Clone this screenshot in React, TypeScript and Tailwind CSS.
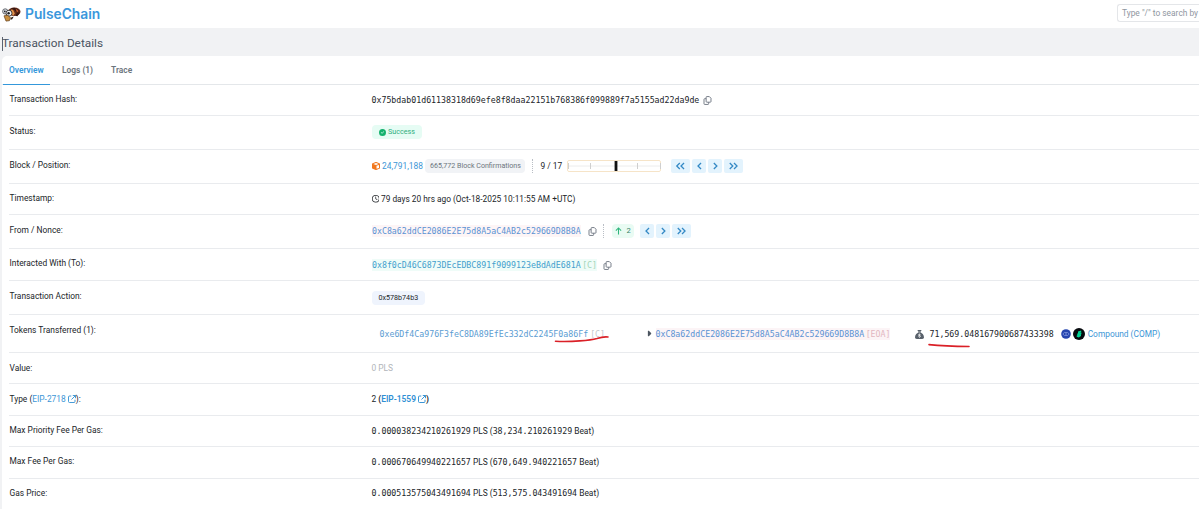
import type { ReactNode } from 'react';
import { FaCube, FaCircleCheck, FaRegClock, FaSackDollar, FaCaretRight } from 'react-icons/fa6';

function Mono({ children, className = '' }: { children: ReactNode; className?: string }) {
  return <span className={`font-['DejaVu_Sans_Mono',monospace] text-[8.26px] ${className}`}>{children}</span>;
}

function CopyIcon({ className = '' }: { className?: string }) {
  return (
    <svg viewBox="0 0 16 16" fill="none" stroke="#6a727e" strokeWidth="1.6" className={`h-[9px] w-[9px] shrink-0 ${className}`}>
      <path d="M6.8 1h4.4l3 3v5.8a1.2 1.2 0 0 1-1.2 1.2H6.8a1.2 1.2 0 0 1-1.2-1.2V2.2A1.2 1.2 0 0 1 6.8 1z" />
      <path d="M5.4 4.8H3a1.2 1.2 0 0 0-1.2 1.2v7.8A1.2 1.2 0 0 0 3 15h5.8a1.2 1.2 0 0 0 1.2-1.2v-2.6" />
    </svg>
  );
}

function ExternalIcon() {
  return (
    <svg viewBox="0 0 16 16" fill="none" stroke="currentColor" strokeWidth="1.9" className="ml-[2px] inline-block h-[8px] w-[8px] align-[-1px]">
      <path d="M6.5 2H3a2 2 0 0 0-2 2v9a2 2 0 0 0 2 2h9a2 2 0 0 0 2-2V9.5M9.5 1H15v5.5M15 1 7 9" />
    </svg>
  );
}

function Step({ kind, className = 'w-[14px]' }: { kind: 'first' | 'prev' | 'next' | 'last'; className?: string }) {
  const paths = {
    first: 'M6 1.2 2.2 5 6 8.8M11.3 1.2 7.5 5 11.3 8.8',
    prev: 'M8.8 1.2 5 5 8.8 8.8',
    next: 'M4.8 1.2 8.6 5 4.8 8.8',
    last: 'M2.2 1.2 6 5 2.2 8.8M7.5 1.2 11.3 5 7.5 8.8',
  };
  return (
    <span className={`flex h-[14px] shrink-0 items-center justify-center rounded-[2px] bg-[#e3f3fd] ${className}`}>
      <svg viewBox="0 0 13.5 10" fill="none" stroke="#3389c5" strokeWidth="1.6" className="h-[8px] w-[10.8px] shrink-0">
        <path d={paths[kind]} />
      </svg>
    </span>
  );
}

function Divider() {
  return <span className="h-[14px] w-0 shrink-0 border-l border-dotted border-[#b9bec5]" />;
}

function BeeLogo() {
  return (
    <svg viewBox="0 0 19 16" className="h-4 w-[19px] shrink-0">
      <ellipse cx="12.3" cy="5.8" rx="6.2" ry="4.2" fill="#6b2f1c" />
      <path d="M8 3.2q4-3 8 0l1.8 3.6-2.4 3.4-2-.4 1.6-3-2.8-3z" fill="#35150f" />
      <path d="M9 3.4l2 .4 1.8 3.8-1.6 2.2-2.2-3z" fill="#e2934a" />
      <path d="M13.5 2.6l2.6 1.6.4 2.4-1.8-.6z" fill="#b9562b" />
      <circle cx="3.2" cy="5.4" r="2.6" fill="#d8dde3" stroke="#4b4f55" strokeWidth=".8" />
      <circle cx="7" cy="7.2" r="3" fill="#eef1f4" stroke="#33302f" strokeWidth=".9" />
      <circle cx="6.6" cy="7.2" r="1.2" fill="#191b20" />
      <circle cx="2.8" cy="5.4" r=".9" fill="#24262b" />
      <path d="M2 9.8l3.6-.5 3 2.4-1.2 3-3.4.4z" fill="#c98f3e" stroke="#5d3b18" strokeWidth=".7" />
      <path d="M9.2 11.4l2.6-.8-1.6 2.6-1.6.6z" fill="#2c1d1a" />
    </svg>
  );
}

interface RowProps {
  label: ReactNode;
  height: string;
  pad: string;
  labelPad?: string;
  children: ReactNode;
}

function Row({ label, height, pad, labelPad = 'pt-[10px]', children }: RowProps) {
  return (
    <div className={`ml-[7px] flex shrink-0 border-b border-[#e9ebee] ${height}`}>
      <div className={`w-[362.5px] shrink-0 pl-[0.5px] leading-[11px] ${labelPad}`}>{label}</div>
      <div className={`flex-1 ${pad}`}>
        <div className="flex h-[14px] items-center whitespace-nowrap">{children}</div>
      </div>
    </div>
  );
}

function Fee({ pls, beat }: { pls: string; beat: string }) {
  return (
    <span>
      <Mono>{pls}</Mono> PLS (<Mono>{beat}</Mono> Beat)
    </span>
  );
}

export default function App() {
  return (
    <div className="relative flex h-[509px] w-[1199px] flex-col overflow-hidden bg-[#f1f2f4] font-[Roboto,sans-serif] text-[8.4px] text-[#212529]">
      <header className="flex h-7 shrink-0 items-start justify-between bg-white">
        <div className="flex items-center pt-[5px] pl-[2px]">
          <BeeLogo />
          <span className="ml-1 font-[Inter,sans-serif] text-[13.8px] leading-[18px] font-semibold text-[#3a97dc]">PulseChain</span>
        </div>
        <div className="mt-1 h-[18px] w-[82px] overflow-hidden rounded-l-[3px] border border-r-0 border-[#e4e6e9] pl-1 leading-[16px] whitespace-nowrap text-[#8f96a1]">
          Type "/" to search by
        </div>
      </header>

      <div className="flex h-7 shrink-0 items-center pt-[3px] pl-[2px]">
        <span className="h-[14px] w-px shrink-0 bg-[#5c6470]" />
        <h1 className="-ml-px text-[11.8px] text-[#4a5361]">Transaction Details</h1>
      </div>

      <main className="ml-[2px] flex min-h-0 flex-1 flex-col rounded-tl-[5px] bg-white">
        <nav className="flex h-[29px] shrink-0 border-b border-[#e4e7ea] pl-px leading-[28px] font-semibold text-[#6c757d]">
          <span className="-mb-px w-[47px] border-b border-[#3498db] pl-[6px] text-[#3498db]">Overview</span>
          <span className="ml-3">Logs (1)</span>
          <span className="ml-[18px]">Trace</span>
        </nav>

        <Row label="Transaction Hash:" height="h-[31px]" pad="pt-[8px]" labelPad="pt-[9px]">
          <Mono>0x75bdab01d61138318d69efe8f8daa22151b768386f099889f7a5155ad22da9de</Mono>
          <CopyIcon className="ml-[4px]" />
        </Row>

        <Row label="Status:" height="h-[34px]" pad="pt-[9px]">
          <span className="flex h-[14px] items-center rounded-[4px] bg-[#e6fcf4] px-[7px] text-[7.2px] text-[#2fae7d]">
            <FaCircleCheck className="mr-[2.5px] h-[7px] w-[7px] text-[#14b16d]" />
            Success
          </span>
        </Row>

        <Row label="Block / Position:" height="h-[34px]" pad="pt-[9px]">
          <FaCube className="h-[8px] w-[8px] text-[#f1781f]" />
          <span className="ml-[2.5px] text-[#3c96d6]">24,791,188</span>
          <span className="ml-[2.5px] flex h-[14px] items-center rounded-[4px] bg-[#f1f3f6] px-[4.5px] text-[7.1px] text-[#6c757d]">665,772 Block Confirmations</span>
          <span className="ml-[7px] flex">
            <Divider />
          </span>
          <span className="ml-[7px]">9 / 17</span>
          <svg viewBox="0 0 95 12" className="ml-[5px] h-3 w-[95px]" fill="none">
            <rect x=".5" y=".5" width="93" height="11" rx="1.5" stroke="#f6e4c8" />
            <path d="M1 6h93" stroke="#ececec" />
            <path d="M1.5 3v6M23.5 3v6M70.5 3v6M93.5 3v6" stroke="#cfcfcf" />
            <path d="M49 1v10" stroke="#111" strokeWidth="2.8" />
          </svg>
          <span className="ml-[9px] flex gap-[2px]">
            <Step kind="first" className="w-[19px]" />
            <Step kind="prev" />
            <Step kind="next" />
            <Step kind="last" className="w-[19px]" />
          </span>
        </Row>

        <Row label="Timestamp:" height="h-[31px]" pad="pt-[8px]" labelPad="pt-[9px]">
          <FaRegClock className="h-[7.5px] w-[7.5px]" />
          <span className="ml-[2px] text-[8.32px]">79 days 20 hrs ago (Oct-18-2025 10:11:55 AM +UTC)</span>
        </Row>

        <Row label="From / Nonce:" height="h-[34px]" pad="pt-[9px]">
          <Mono className="ml-[0.5px] bg-[#fdf5f6] text-[#5b92d3]">0xC8a62ddCE2086E2E75d8A5aC4AB2c529669D8B8A</Mono>
          <CopyIcon className="ml-[7px]" />
          <span className="ml-[6.5px] flex">
            <Divider />
          </span>
          <span className="ml-[8px] flex h-[14px] w-[22px] items-center justify-center gap-1 rounded-[4px] bg-[#e9fbf3] text-[7.6px] text-[#3a8569]">
            <svg viewBox="0 0 8 9" className="h-[8px] w-[7px]" fill="none" stroke="#2fb57c" strokeWidth="1.2">
              <path d="M4 8.5V1M1 4l3-3 3 3" />
            </svg>
            2
          </span>
          <span className="ml-[6px] flex gap-[2px]">
            <Step kind="prev" />
            <Step kind="next" />
            <Step kind="last" className="w-[19px]" />
          </span>
        </Row>

        <Row label="Interacted With (To):" height="h-[32px]" pad="pt-[9px]" labelPad="pt-[9px]">
          <span className="ml-[0.5px] flex items-center bg-[#effcf8]">
            <Mono className="text-[#43a0cd]">0x8f0cD46C6873DEcEDBC891f9099123eBdAdE681A</Mono>
            <Mono className="ml-[1.5px] text-[7px] text-[#a3d6b9]">[C]</Mono>
          </span>
          <CopyIcon className="ml-[6px]" />
        </Row>

        <Row label="Transaction Action:" height="h-[34px]" pad="pt-[10px]">
          <span className="flex h-[14px] items-center rounded-[4px] bg-[#eff4fd] px-[7px] text-[7.15px]">0x578b74b3</span>
        </Row>

        <Row label="Tokens Transferred (1):" height="h-[38px]" pad="pt-[12px]">
          <div className="flex w-[274px] shrink-0 items-center pl-[8px]">
            <Mono className="text-[#5b9cd2]">0xe6Df4Ca976F3feC8DA89EfEc332dC2245F0a86Ff</Mono>
            <Mono className="ml-[2px] text-[7px] text-[#c4c8cc]">[C]</Mono>
          </div>
          <div className="flex w-[269.5px] shrink-0 items-center">
            <FaCaretRight className="mr-[4px] h-[9px] w-[6px] text-[#4c5560]" />
            <span className="flex items-center bg-[#fcf4f6]">
              <Mono className="text-[#5b92d3]">0xC8a62ddCE2086E2E75d8A5aC4AB2c529669D8B8A</Mono>
              <Mono className="ml-[1.5px] text-[7px] text-[#e2b7bf]">[EOA]</Mono>
            </span>
          </div>
          <FaSackDollar className="h-[9px] w-[9px] text-[#59616b]" />
          <Mono className="ml-[5.5px]">71,569.048167900687433398</Mono>
          <svg viewBox="0 0 10 10" className="ml-[7.5px] h-[10px] w-[10px]">
            <circle cx="5" cy="5" r="4.8" fill="#2544ae" />
            <path d="M1.8 5l1.6-1.5h3.2L8.2 5 6.6 6.5H3.4z" fill="none" stroke="#8197e0" strokeWidth=".8" />
            <circle cx="5" cy="5" r=".8" fill="#8197e0" />
          </svg>
          <svg viewBox="0 0 12 12" className="ml-[1.5px] h-3 w-3">
            <circle cx="6" cy="6" r="6" fill="#070a0e" />
            <path d="M5 3.6 8.2 2.5v1.7L5 5.5zM4.2 5.6 8.4 4.6v1.6L4.2 7.4zM3.7 7.6l4.3-1v1.5L5.8 9.6 3.7 8.8z" fill="#00d395" />
          </svg>
          <span className="ml-[3px] text-[8.35px] text-[#3c96d6]">Compound (COMP)</span>
        </Row>

        <Row label="Value:" height="h-[31px]" pad="pt-[8px]">
          <span className="text-[#b1b5ba]">0 PLS</span>
        </Row>

        <Row
          label={
            <>
              Type (<span className="text-[#3c96d6]">EIP-2718<ExternalIcon /></span>):
            </>
          }
          height="h-[32px]"
          pad="pt-[8px]"
        >
          <span>
            2 <b className="font-semibold">(<span className="text-[#2f8fd4]">EIP-1559<ExternalIcon /></span>)</b>
          </span>
        </Row>

        <Row label="Max Priority Fee Per Gas:" height="h-[31px]" pad="pt-[8px]" labelPad="pt-[9px]">
          <Fee pls="0.000038234210261929" beat="38,234.210261929" />
        </Row>
        <Row label="Max Fee Per Gas:" height="h-[32px]" pad="pt-[8px]" labelPad="pt-[9px]">
          <Fee pls="0.000670649940221657" beat="670,649.940221657" />
        </Row>
        <Row label="Gas Price:" height="h-[31px]" pad="pt-[7px]" labelPad="pt-[9px]">
          <Fee pls="0.000513575043491694" beat="513,575.043491694" />
        </Row>
      </main>

      <svg viewBox="0 0 1199 509" className="pointer-events-none absolute inset-0 h-full w-full" fill="none" stroke="#da2027" strokeLinecap="round">
        <path d="M555.5 341.3C572 342 590 340.5 597 338.5Q603 336.5 608 337" strokeWidth="1.6" />
        <path d="M929 344.6Q945 346.3 969 346.5" strokeWidth="1.6" />
      </svg>
    </div>
  );
}
